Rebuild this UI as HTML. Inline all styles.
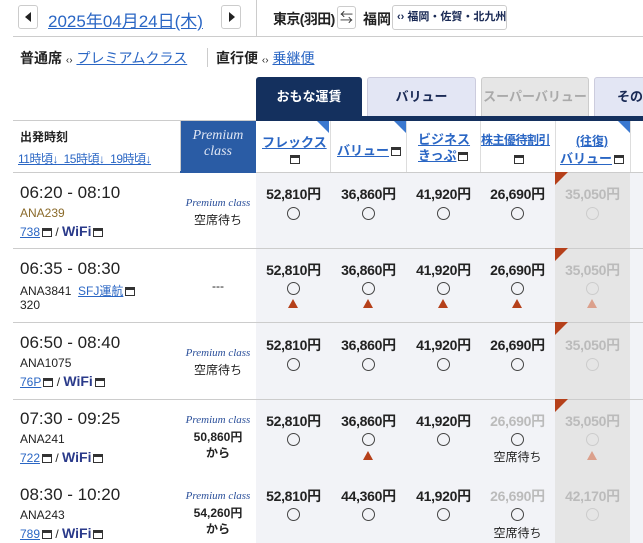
<!DOCTYPE html>
<html><head><meta charset="utf-8"><style>
*{margin:0;padding:0;box-sizing:border-box}
body{width:643px;height:543px;overflow:hidden;background:#fff;font-family:"Liberation Sans","Noto Sans CJK JP",sans-serif;color:#222;position:relative}
.a{position:absolute;white-space:nowrap}
.lk{color:#2a66c4;text-decoration:underline}
.b{font-weight:bold}
.btn{position:absolute;border:1px solid #ccc;border-radius:3px;background:#fff}
.ic{display:inline-block;width:10px;height:9px;border:1.5px solid #333;border-top-width:3px;vertical-align:middle;margin-left:2px;position:relative}
.pr{position:absolute;width:75px;text-align:center;font-size:14px;font-weight:bold;letter-spacing:-0.3px}
.cir{position:absolute;width:13px;height:13px;border:1.3px solid #444;border-radius:50%}
.tri{position:absolute;width:0;height:0;border-left:5px solid transparent;border-right:5px solid transparent;border-bottom:9px solid #b5401a}
.cor{position:absolute;width:0;height:0;border-top:13px solid #b5401a;border-right:13px solid transparent}
.pc{position:absolute;font-family:"Liberation Serif",serif;font-style:italic;color:#2a4f9a;font-size:11px;width:76px;text-align:center}
.wifi{color:#2a3a8a;font-weight:bold;font-size:14px}
.sep{position:absolute;left:13px;width:630px;height:1px;background:#ccc}
</style></head><body>
<div class="btn" style="left:18px;top:5px;width:20px;height:24px"><div class="a" style="left:6px;top:6px;border-top:5px solid transparent;border-bottom:5px solid transparent;border-right:6px solid #222"></div></div>
<div class="a lk" style="left:48px;top:7px;font-size:17px">2025年04月24日(木)</div>
<div class="btn" style="left:221px;top:5px;width:20px;height:24px"><div class="a" style="left:7px;top:6px;border-top:5px solid transparent;border-bottom:5px solid transparent;border-left:6px solid #222"></div></div>
<div class="a" style="left:256px;top:0;width:1px;height:37px;background:#ccc"></div>
<div class="a b" style="left:273px;top:9px;font-size:14px;letter-spacing:-0.6px">東京(羽田)</div>
<div class="btn" style="left:337px;top:6px;width:19px;height:23px;font-size:13px;text-align:center;line-height:21px;color:#333">⇆</div>
<div class="a b" style="left:363px;top:9px;font-size:14px">福岡</div>
<div class="btn" style="left:392px;top:5px;width:115px;height:25px;font-size:11px;font-weight:bold;line-height:23px;padding-left:4px;color:#1a2a55;white-space:nowrap">‹› 福岡・佐賀・北九州</div>
<div class="a" style="left:13px;top:36px;width:630px;height:1px;background:#ccc"></div>
<div class="a b" style="left:20px;top:48px;font-size:14px">普通席 <span style="font-weight:normal;font-size:10px">‹›</span> <span class="lk" style="font-weight:normal">プレミアムクラス</span></div>
<div class="a" style="left:207px;top:48px;width:1px;height:19px;background:#ccc"></div>
<div class="a b" style="left:216px;top:48px;font-size:14px">直行便 <span style="font-weight:normal;font-size:10px">‹›</span> <span class="lk" style="font-weight:normal">乗継便</span></div>
<div class="a b" style="left:256px;top:77px;width:106px;height:40px;background:#14305e;color:#fff;border-radius:3px 3px 0 0;font-size:13px;text-align:center;line-height:40px">おもな運賃</div>
<div class="a b" style="left:367px;top:77px;width:109px;height:40px;background:#e3e6f4;border:1px solid #ccd;border-radius:3px 3px 0 0;font-size:13px;text-align:center;line-height:38px;color:#1a2a55">バリュー</div>
<div class="a b" style="left:481px;top:77px;width:108px;height:40px;background:#e6e6e6;border:1px solid #ccc;border-radius:3px 3px 0 0;font-size:13px;text-align:center;line-height:38px;color:#aaa">スーパーバリュー</div>
<div class="a b" style="left:594px;top:77px;width:60px;height:40px;background:#e3e6f4;border:1px solid #ccd;border-radius:3px 3px 0 0;font-size:13px;line-height:38px;padding-left:22px;color:#1a2a55">その</div>
<div class="a" style="left:256px;top:116px;width:387px;height:5px;background:#14305e"></div>
<div class="a" style="left:13px;top:120px;width:243px;height:1px;background:#ccc"></div>
<div class="a b" style="left:20px;top:128px;font-size:12px">出発時刻</div>
<div class="a lk" style="left:18px;top:150px;font-size:12px;letter-spacing:-0.5px">11時頃<span>↓</span>&nbsp; 15時頃<span>↓</span>&nbsp; 19時頃<span>↓</span></div>
<div class="a" style="left:180px;top:121px;width:76px;height:51px;background:#2a5ca5;border-left:1px solid #ccc"></div>
<div class="a" style="left:180px;top:128px;width:76px;text-align:center;font-family:'Liberation Serif',serif;font-style:italic;color:#dfe6f4;font-size:14px;line-height:16px">Premium<br>class</div>
<div class="a" style="left:256px;top:121px;width:387px;height:51px;background:#fff"></div>
<div class="a" style="left:330px;top:121px;width:1px;height:51px;background:#ddd"></div>
<div class="a" style="left:406px;top:121px;width:1px;height:51px;background:#ddd"></div>
<div class="a" style="left:480px;top:121px;width:1px;height:51px;background:#ddd"></div>
<div class="a" style="left:555px;top:121px;width:1px;height:51px;background:#ddd"></div>
<div class="a" style="left:630px;top:121px;width:1px;height:51px;background:#ddd"></div>
<div class="a" style="left:317px;top:121px;border-top:12px solid #3a78d0;border-left:12px solid transparent"></div>
<div class="a" style="left:394px;top:121px;border-top:12px solid #3a78d0;border-left:12px solid transparent"></div>
<div class="a" style="left:618px;top:121px;border-top:12px solid #3a78d0;border-left:12px solid transparent"></div>
<div class="a b lk" style="left:262px;top:132px;font-size:13px">フレックス</div>
<div class="a" style="left:288px;top:151px"><span class="ic"></span></div>
<div class="a b lk" style="left:337px;top:140px;font-size:13px">バリュー<span class="ic" style="text-decoration:none"></span></div>
<div class="a b lk" style="left:418px;top:132px;font-size:13px;line-height:16px">ビジネス<br>きっぷ<span class="ic"></span></div>
<div class="a b lk" style="left:481px;top:131px;font-size:12px;letter-spacing:-0.5px">株主優待割引</div>
<div class="a" style="left:512px;top:151px"><span class="ic"></span></div>
<div class="a b lk" style="left:576px;top:132px;font-size:12px">(往復)</div>
<div class="a b lk" style="left:560px;top:148px;font-size:13px">バリュー<span class="ic"></span></div>
<div class="a" style="left:13px;top:172px;width:630px;height:1px;background:#ccc"></div>
<div class="a" style="left:180px;top:171px;width:76px;height:2px;background:#2a5ca5"></div>
<div class="a" style="left:256px;top:173px;width:387px;height:370px;background:#f2f3f7"></div>
<div class="a" style="left:555px;top:173px;width:75px;height:370px;background:#e5e5e5"></div>
<div class="sep" style="top:248px"></div>
<div class="sep" style="top:322px"></div>
<div class="sep" style="top:399px"></div>

<div class="a" style="left:20px;top:183px;font-size:17px">06:20 - 08:10</div>
<div class="a" style="left:20px;top:206px;font-size:12px;color:#8a6a2a">ANA239</div>
<div class="a" style="left:20px;top:223px;font-size:12px"><span class="lk">738</span><span class="ic"></span> / <span class="wifi">WiFi</span><span class="ic"></span></div>
<div class="pc" style="left:180px;top:197px">Premium class</div>
<div class="a" style="left:180px;top:211px;width:76px;text-align:center;font-size:12px">空席待ち</div>

<div class="a" style="left:20px;top:259px;font-size:17px">06:35 - 08:30</div>
<div class="a" style="left:20px;top:282px;font-size:12px">ANA3841 &nbsp;<span class="lk">SFJ運航</span><span class="ic"></span></div>
<div class="a" style="left:20px;top:298px;font-size:12px">320</div>
<div class="a" style="left:180px;top:279px;width:76px;text-align:center;font-size:12px">---</div>

<div class="a" style="left:20px;top:333px;font-size:17px">06:50 - 08:40</div>
<div class="a" style="left:20px;top:356px;font-size:12px">ANA1075</div>
<div class="a" style="left:20px;top:373px;font-size:12px"><span class="lk">76P</span><span class="ic"></span> / <span class="wifi">WiFi</span><span class="ic"></span></div>
<div class="pc" style="left:180px;top:347px">Premium class</div>
<div class="a" style="left:180px;top:361px;width:76px;text-align:center;font-size:12px">空席待ち</div>

<div class="a" style="left:20px;top:409px;font-size:17px">07:30 - 09:25</div>
<div class="a" style="left:20px;top:432px;font-size:12px">ANA241</div>
<div class="a" style="left:20px;top:449px;font-size:12px"><span class="lk">722</span><span class="ic"></span> / <span class="wifi">WiFi</span><span class="ic"></span></div>
<div class="pc" style="left:180px;top:414px">Premium class</div>
<div class="a b" style="left:180px;top:429px;width:76px;text-align:center;font-size:12px;line-height:16px">50,860円<br>から</div>

<div class="a" style="left:20px;top:485px;font-size:17px">08:30 - 10:20</div>
<div class="a" style="left:20px;top:508px;font-size:12px">ANA243</div>
<div class="a" style="left:20px;top:525px;font-size:12px"><span class="lk">789</span><span class="ic"></span> / <span class="wifi">WiFi</span><span class="ic"></span></div>
<div class="pc" style="left:180px;top:490px">Premium class</div>
<div class="a b" style="left:180px;top:505px;width:76px;text-align:center;font-size:12px;line-height:16px">54,260円<br>から</div>

<div class="pr" style="left:256px;top:184px">52,810円</div><div class="pr" style="left:331px;top:184px">36,860円</div><div class="pr" style="left:406px;top:184px">41,920円</div><div class="pr" style="left:480px;top:184px">26,690円</div><div class="pr" style="left:555px;top:184px;color:#bbb">35,050円</div>
<div class="cir" style="left:287px;top:207px"></div><div class="cir" style="left:362px;top:207px"></div><div class="cir" style="left:437px;top:207px"></div><div class="cir" style="left:511px;top:207px"></div><div class="cir" style="left:586px;top:207px;border-color:#ccc"></div>
<div class="cor" style="left:555px;top:172px"></div>

<div class="pr" style="left:256px;top:260px">52,810円</div><div class="pr" style="left:331px;top:260px">36,860円</div><div class="pr" style="left:406px;top:260px">41,920円</div><div class="pr" style="left:480px;top:260px">26,690円</div><div class="pr" style="left:555px;top:260px;color:#bbb">35,050円</div>
<div class="cir" style="left:287px;top:282px"></div><div class="cir" style="left:362px;top:282px"></div><div class="cir" style="left:437px;top:282px"></div><div class="cir" style="left:511px;top:282px"></div><div class="cir" style="left:586px;top:282px;border-color:#ccc"></div>
<div class="tri" style="left:288px;top:299px"></div><div class="tri" style="left:363px;top:299px"></div><div class="tri" style="left:438px;top:299px"></div><div class="tri" style="left:512px;top:299px"></div><div class="tri" style="left:587px;top:299px;border-bottom-color:#dba08c"></div>
<div class="cor" style="left:555px;top:248px"></div>

<div class="pr" style="left:256px;top:335px">52,810円</div><div class="pr" style="left:331px;top:335px">36,860円</div><div class="pr" style="left:406px;top:335px">41,920円</div><div class="pr" style="left:480px;top:335px">26,690円</div><div class="pr" style="left:555px;top:335px;color:#bbb">35,050円</div>
<div class="cir" style="left:287px;top:358px"></div><div class="cir" style="left:362px;top:358px"></div><div class="cir" style="left:437px;top:358px"></div><div class="cir" style="left:511px;top:358px"></div><div class="cir" style="left:586px;top:358px;border-color:#ccc"></div>
<div class="cor" style="left:555px;top:322px"></div>

<div class="pr" style="left:256px;top:411px">52,810円</div><div class="pr" style="left:331px;top:411px">36,860円</div><div class="pr" style="left:406px;top:411px">41,920円</div><div class="pr" style="left:480px;top:411px;color:#bbb">26,690円</div><div class="pr" style="left:555px;top:411px;color:#bbb">35,050円</div>
<div class="cir" style="left:287px;top:433px"></div><div class="cir" style="left:362px;top:433px"></div><div class="cir" style="left:437px;top:433px"></div><div class="cir" style="left:511px;top:433px"></div><div class="cir" style="left:586px;top:433px;border-color:#ccc"></div>
<div class="tri" style="left:363px;top:451px"></div><div class="tri" style="left:587px;top:451px;border-bottom-color:#dba08c"></div>
<div class="a" style="left:480px;top:448px;width:75px;text-align:center;font-size:12px">空席待ち</div>
<div class="cor" style="left:555px;top:399px"></div>

<div class="pr" style="left:256px;top:486px">52,810円</div><div class="pr" style="left:331px;top:486px">44,360円</div><div class="pr" style="left:406px;top:486px">41,920円</div><div class="pr" style="left:480px;top:486px;color:#bbb">26,690円</div><div class="pr" style="left:555px;top:486px;color:#bbb">42,170円</div>
<div class="cir" style="left:287px;top:508px"></div><div class="cir" style="left:362px;top:508px"></div><div class="cir" style="left:437px;top:508px"></div><div class="cir" style="left:511px;top:508px"></div><div class="cir" style="left:586px;top:508px;border-color:#ccc"></div>
<div class="a" style="left:480px;top:524px;width:75px;text-align:center;font-size:12px">空席待ち</div>
</body></html>
